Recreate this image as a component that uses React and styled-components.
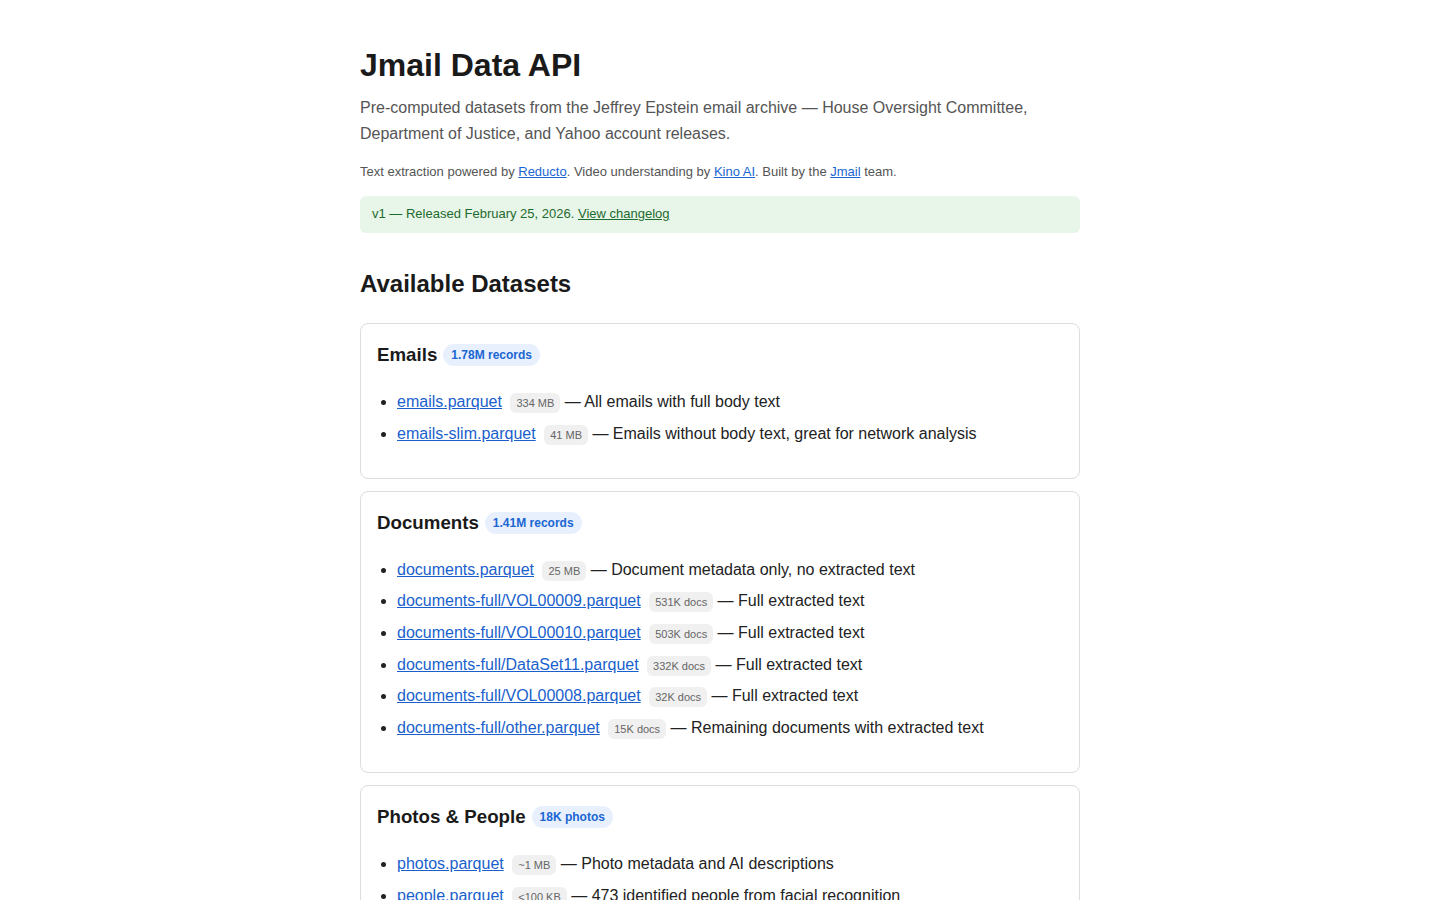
import React from 'react';
import styled, { createGlobalStyle } from 'styled-components';

const GlobalStyle = createGlobalStyle`
  body {
    margin: 0;
    background: #fff;
    color: #1a1a1a;
    font-family: "Liberation Sans", Arial, sans-serif;
  }
`;

const Page = styled.main`
  max-width: 720px;
  margin: 0 auto;
  padding: 46px 0 40px;
`;

const Title = styled.h1`
  font-size: 32px;
  line-height: 1.2;
  font-weight: 700;
  margin: 0 0 11px;
  color: #1a1a1a;
`;

const Lead = styled.p`
  font-size: 16px;
  line-height: 26px;
  color: #555;
  margin: 0 0 15px;
`;

const Credits = styled.p`
  font-size: 13px;
  line-height: 20px;
  color: #555;
  margin: 0 0 14px;

  a {
    color: #1a66d2;
  }
`;

const Release = styled.div`
  background: #e8f5e9;
  color: #1e6b2e;
  font-size: 13px;
  line-height: 17px;
  padding: 9px 12px 11px;
  border-radius: 6px;

  a {
    color: #1e6b2e;
  }
`;

const SectionTitle = styled.h2`
  font-size: 24px;
  line-height: 1.2;
  font-weight: 700;
  margin: 37px 0 24px;
`;

const Card = styled.section`
  border: 1px solid #ddd;
  border-radius: 8px;
  padding: 16px;
  margin-bottom: 12px;
`;

const CardTitle = styled.h3`
  display: flex;
  align-items: center;
  gap: 6px;
  font-size: 18.72px;
  line-height: 30px;
  font-weight: 700;
  margin: 0;
  color: #1a1a1a;
`;

const Badge = styled.span`
  display: inline-block;
  background: #e8f0fe;
  color: #1a66d2;
  font-size: 12px;
  font-weight: 700;
  line-height: 14px;
  padding: 4px 8px;
  border-radius: 11px;
`;

const FileList = styled.ul`
  margin: 19px 0 15.5px;
  padding-left: 20px;
`;

const FileItem = styled.li`
  font-size: 16px;
  line-height: 1.6;
  margin: 6px 0;
  color: #222;

  a {
    color: #1a5fcc;
  }
`;

const Size = styled.span`
  display: inline-block;
  background: #f0f0f0;
  color: #666;
  font-size: 11px;
  line-height: 14px;
  padding: 3px 6px;
  border-radius: 6px;
  margin: 0 0 0 4px;
  vertical-align: 0;
`;

const datasets = [
  {
    name: 'Emails',
    badge: '1.78M records',
    files: [
      ['emails.parquet', '334 MB', 'All emails with full body text'],
      ['emails-slim.parquet', '41 MB', 'Emails without body text, great for network analysis'],
    ],
  },
  {
    name: 'Documents',
    badge: '1.41M records',
    files: [
      ['documents.parquet', '25 MB', 'Document metadata only, no extracted text'],
      ['documents-full/VOL00009.parquet', '531K docs', 'Full extracted text'],
      ['documents-full/VOL00010.parquet', '503K docs', 'Full extracted text'],
      ['documents-full/DataSet11.parquet', '332K docs', 'Full extracted text'],
      ['documents-full/VOL00008.parquet', '32K docs', 'Full extracted text'],
      ['documents-full/other.parquet', '15K docs', 'Remaining documents with extracted text'],
    ],
  },
  {
    name: 'Photos & People',
    badge: '18K photos',
    files: [
      ['photos.parquet', '~1 MB', 'Photo metadata and AI descriptions'],
      ['people.parquet', '<100 KB', '473 identified people from facial recognition'],
    ],
  },
];

export default function App() {
  return (
    <>
      <GlobalStyle />
      <Page>
        <Title>Jmail Data API</Title>
        <Lead>
          Pre-computed datasets from the Jeffrey Epstein email archive — House Oversight Committee,
          Department of Justice, and Yahoo account releases.
        </Lead>
        <Credits>
          Text extraction powered by <a href="#">Reducto</a>. Video understanding by{' '}
          <a href="#">Kino AI</a>. Built by the <a href="#">Jmail</a> team.
        </Credits>
        <Release>
          v1 — Released February 25, 2026. <a href="#">View changelog</a>
        </Release>

        <SectionTitle>Available Datasets</SectionTitle>

        {datasets.map((set) => (
          <Card key={set.name}>
            <CardTitle>
              {set.name}
              <Badge>{set.badge}</Badge>
            </CardTitle>
            <FileList>
              {set.files.map(([file, size, desc]) => (
                <FileItem key={file}>
                  <a href="#">{file}</a> <Size>{size}</Size> — {desc}
                </FileItem>
              ))}
            </FileList>
          </Card>
        ))}
      </Page>
    </>
  );
}
